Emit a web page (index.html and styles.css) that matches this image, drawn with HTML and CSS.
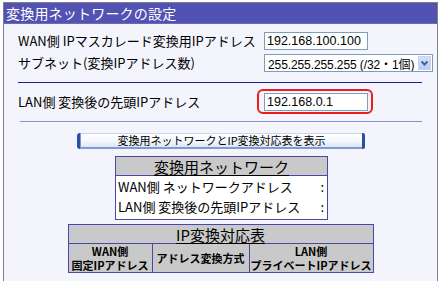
FILE: index.html
```html
<!DOCTYPE html>
<html lang="ja">
<head>
<meta charset="utf-8">
<link rel="stylesheet" href="styles.css">
</head>
<body>
<div class="panel">
  <div class="title">変換用ネットワークの設定</div>
  <div class="form">
    <div class="row">
      <div class="label">WAN側 IPマスカレード変換用IPアドレス</div>
      <div class="input">192.168.100.100</div>
    </div>
    <div class="row row-gap">
      <div class="label">サブネット(変換IPアドレス数)</div>
      <div class="select">
        <span class="select-text">255.255.255.255 (/32・1個)</span>
        <span class="select-btn">
          <svg width="11" height="10" viewBox="0 0 11 10"><path d="M2.5 3.5 L5.5 6.5 L8.5 3.5" fill="none" stroke="#4d6185" stroke-width="2"/></svg>
        </span>
      </div>
    </div>
    <div class="sep-dark"></div>
    <div class="row row3">
      <div class="label">LAN側 変換後の先頭IPアドレス</div>
      <div class="highlight"><div class="input">192.168.0.1</div></div>
    </div>
    <div class="sep-light"></div>
  </div>
  <div class="center">
    <div class="button"><span class="cap-l"></span><span class="btn-text">変換用ネットワークとIP変換対応表を表示</span><span class="cap-r"></span></div>
    <table class="t1">
      <tr><th class="hdr">変換用ネットワーク</th></tr>
      <tr><td class="body">
        <div class="kv">
          <span>WAN側 ネットワークアドレス</span><span>:</span>
          <span>LAN側 変換後の先頭IPアドレス</span><span>:</span>
        </div>
      </td></tr>
    </table>
    <table class="t2">
      <colgroup><col class="c1"><col class="c2"><col class="c3"></colgroup>
      <tr><th class="hdr" colspan="3">IP変換対応表</th></tr>
      <tr>
        <th class="sub bl"><div class="ln">WAN側</div><div class="ln">固定IPアドレス</div></th>
        <th class="sub bl">アドレス変換方式</th>
        <th class="sub"><div class="ln">LAN側</div><div class="ln">プライベートIPアドレス</div></th>
      </tr>
    </table>
  </div>
</div>
</body>
</html>
```
FILE: styles.css
```css
* { box-sizing: border-box; }
html, body { background: #ffffff; }
body {
  margin: 2px 5px 0 3px;
  font-family: "Noto Sans CJK JP", "Noto Sans", sans-serif;
  color: #000;
  overflow: hidden;
  height: 279px;
}
.panel {
  border: 1px solid #80808c;
  border-bottom: none;
  background: #f4f4fc;
  height: 279px;
  overflow: hidden;
}
.title {
  background: #5252b2;
  color: #fff;
  font-size: 14px;
  letter-spacing: 0.2px;
  height: 21px;
  line-height: 21px;
  padding-left: 2px;
  border-bottom: 1px solid #6a6ab8;
}
.form { padding: 8px 14px 0 14px; }
.row {
  display: grid;
  grid-template-columns: 246px auto;
  align-items: center;
  height: 18px;
}
.row-gap { margin-top: 4px; }
.label {
  font-size: 13px;
  line-height: 18px;
  white-space: nowrap;
}
.input {
  width: 104px;
  height: 18px;
  border: 1px solid #7f9db9;
  background: #fff;
  font-family: "Liberation Sans", Arial, sans-serif;
  font-size: 12.5px;
  line-height: 16px;
  padding-left: 2px;
}
.select {
  width: 169px;
  height: 18px;
  border: 1px solid #7f9db9;
  background: #fff;
  display: flex;
  align-items: center;
  justify-content: space-between;
  padding: 1px;
  overflow: hidden;
}
.select-text {
  font-family: "Liberation Sans", "Noto Sans CJK JP", sans-serif;
  font-size: 12px;
  padding-left: 2px;
  white-space: nowrap;
  letter-spacing: -0.1px;
}
.select-btn {
  flex: none;
  width: 13px;
  height: 14px;
  background: linear-gradient(#d4e0fb, #b9cdf5);
  border: 1px solid #c4d3f3;
  display: flex;
  align-items: center;
  justify-content: center;
}
.sep-dark {
  height: 1px;
  background: #1e1e8c;
  margin: 10px 1px 0 0;
}
.row3 {
  height: 25px;
  margin-top: 6px;
}
.highlight {
  margin-left: -7px;
  width: 116px;
  height: 25px;
  border: 2px solid #ee1c1c;
  border-radius: 6px;
  padding: 2px 0 0 5px;
}
.sep-light {
  height: 1px;
  background: #8c8cd0;
  margin: 7px 1px 0 2px;
}
.center {
  display: flex;
  flex-direction: column;
  align-items: center;
}
.button {
  margin-top: 11px;
  width: 288px;
  height: 16px;
  display: flex;
  align-items: stretch;
  margin-left: 1px;
}
.cap-l {
  width: 4px;
  background: #2a4f9e;
  border-radius: 3px 0 0 3px;
  border-right: 1px solid #7e9ad0;
}
.cap-r {
  width: 3px;
  background: #2a4f9e;
  border-radius: 0 2px 2px 0;
}
.btn-text {
  flex: 1;
  background: linear-gradient(#ffffff 0%, #f4f7fc 55%, #dbe5f4 100%);
  border-top: 1px solid #c9d6ee;
  border-bottom: 2px solid #7d9bd5;
  font-size: 11px;
  line-height: 13px;
  text-align: center;
  white-space: nowrap;
}
table {
  border-collapse: collapse;
  background: #fff;
  table-layout: fixed;
}
.t1 {
  margin-top: 7px;
  width: 213px;
  margin-left: 2px;
  border: 1px solid #4848aa;
}
.t2 {
  margin-top: 4px;
  width: 305px;
  border: 1px solid #4848aa;
}
th, td { padding: 0; }
.hdr {
  background: #c9c9c9;
  height: 19px;
  font-size: 15px;
  font-weight: 400;
  line-height: 17px;
  text-decoration: underline;
  text-underline-offset: 2px;
  border-bottom: 1px solid #4848aa;
}
.body { padding: 1px 3px 2px 2px; }
.kv {
  display: grid;
  grid-template-columns: auto auto;
  justify-content: space-between;
  font-size: 13px;
  line-height: 20px;
  white-space: nowrap;
}
.sub {
  background: #c9c9c9;
  font-size: 11px;
  font-weight: 700;
  line-height: 14px;
  height: 28px;
  white-space: nowrap;
  overflow: hidden;
}
.ln { height: 14px; line-height: 14px; }
.bl { border-right: 1px solid #4848aa; }
.c1 { width: 84px; }
.c2 { width: 97px; }
.c3 { width: 124px; }
```
